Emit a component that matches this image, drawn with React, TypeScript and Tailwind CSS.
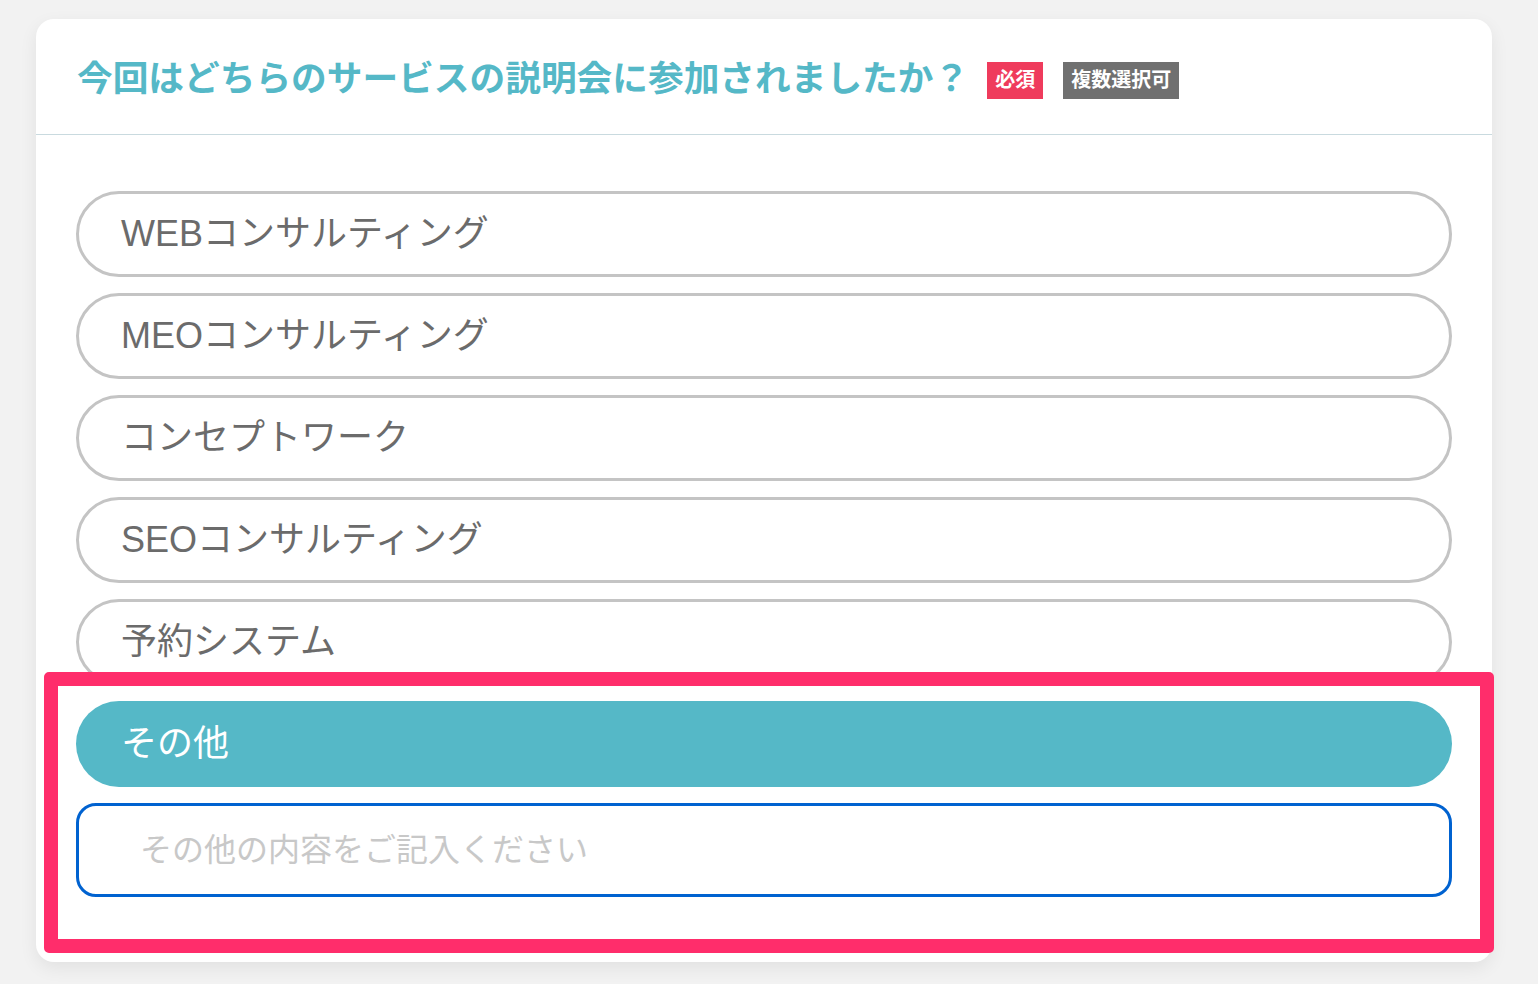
import React, { useState } from "react";

const options = [
  "WEBコンサルティング",
  "MEOコンサルティング",
  "コンセプトワーク",
  "SEOコンサルティング",
  "予約システム",
];

const font = {
  fontFamily: '"Liberation Sans", "Noto Sans CJK JP", sans-serif',
};

export default function App() {
  const [other, setOther] = useState("");

  return (
    <div
      className="min-h-screen bg-[#f2f2f2] pt-[19px] pl-[36px] pr-[46px]"
      style={font}
    >
      <div className="relative w-[1456px] rounded-[18px] bg-white shadow-[0_6px_18px_rgba(0,0,0,0.07)]">
        <div className="flex h-[116px] items-center border-b border-[#c9dadf] pt-[7px] pl-[41px]">
          <h2 className="text-[35.7px] font-bold leading-none text-[#55b8c7]">
            今回はどちらのサービスの説明会に参加されましたか？
          </h2>
          <span className="ml-[18px] flex h-[37px] items-center bg-[#ef3b5c] px-2 text-[20px] font-bold leading-none text-white">
            必須
          </span>
          <span className="ml-[20px] flex h-[37px] items-center bg-[#707070] px-2 text-[20px] font-bold leading-none text-white">
            複数選択可
          </span>
        </div>

        <div className="flex flex-col gap-4 px-10 pt-[56px] pb-[65px]">
          {options.map((o) => (
            <button
              key={o}
              type="button"
              className="flex h-[86px] items-center rounded-full border-[3px] border-[#c4c4c4] bg-white pl-[42px] text-left text-[36px] leading-none text-[#6b6b6b]"
            >
              {o}
            </button>
          ))}

          <div className="relative flex flex-col gap-4">
            <button
              type="button"
              className="flex h-[86px] items-center rounded-full bg-[#55b8c7] pl-[45px] text-left text-[36px] leading-none text-white"
            >
              その他
            </button>
            <input
              type="text"
              value={other}
              onChange={(e) => setOther(e.target.value)}
              placeholder="その他の内容をご記入ください"
              className="h-[94px] rounded-[20px] border-[3px] border-[#0062d0] pl-[61px] text-[32px] text-[#333] outline-none placeholder:text-[#c8c8c8]"
            />
            <div className="pointer-events-none absolute -top-[29px] -bottom-[56px] -left-[32px] -right-[42px] rounded-[5px] border-[14px] border-[#ff2d6b]" />
          </div>
        </div>
      </div>
    </div>
  );
}
